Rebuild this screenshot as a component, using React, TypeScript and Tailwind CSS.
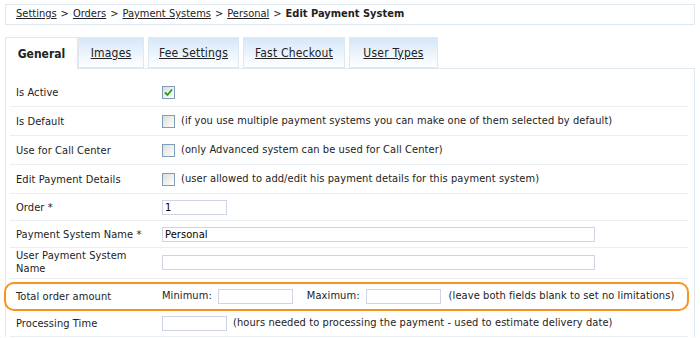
import { ReactNode } from "react";

const tabs = [
	{ name: "Images", w: "w-[66px]" },
	{ name: "Fee Settings", w: "w-[91px]" },
	{ name: "Fast Checkout", w: "w-[102px]" },
	{ name: "User Types", w: "w-[89px]" },
];

function Checkbox({ checked = false }: { checked?: boolean }) {
	return (
		<span className="inline-flex w-[13px] h-[13px] border border-[#7f9db9] bg-gradient-to-br from-[#dcdcd7] to-white items-center justify-center shrink-0">
			{checked && (
				<svg width="9" height="9" viewBox="0 0 9 9" aria-hidden="true">
					<path d="M1 4.5 L3.5 7 L8 1.5" fill="none" stroke="#21a121" strokeWidth="1.8" />
				</svg>
			)}
		</span>
	);
}

function Input({ w, value = "" }: { w: string; value?: string }) {
	return (
		<div className={`${w} h-[15px] border border-[#cfd3e6] bg-white px-[2px] text-[11px] leading-[13px] text-black`}>
			{value}
		</div>
	);
}

function Row({
	label,
	children,
	className = "",
	last = false,
}: {
	label: ReactNode;
	children?: ReactNode;
	className?: string;
	last?: boolean;
}) {
	return (
		<div
			className={`flex items-center ${last ? "" : "border-b border-[#e8eff5]"} ${className}`}
		>
			<div className="w-[152px] pl-[6px] leading-[13px]">{label}</div>
			<div className="flex items-center gap-[6px]">{children}</div>
		</div>
	);
}

export default function App() {
	return (
		<div
			className="w-[700px] h-[338px] bg-white overflow-hidden text-[11px] text-[#222]"
			style={{ fontFamily: '"DejaVu Sans Condensed", "DejaVu Sans", sans-serif' }}
		>
			{/* Breadcrumb */}
			<div className="mx-[5px] mt-[4px] h-[21px] border border-[#dde8f0] flex items-center pl-[10px]">
				<span className="underline">Settings</span>
				<span className="mx-[4px]">&gt;</span>
				<span className="underline">Orders</span>
				<span className="mx-[4px]">&gt;</span>
				<span className="underline">Payment Systems</span>
				<span className="mx-[4px]">&gt;</span>
				<span className="underline">Personal</span>
				<span className="mx-[4px]">&gt;</span>
				<span className="font-bold">Edit Payment System</span>
			</div>

			{/* Tabs */}
			<div className="flex mt-[12px] ml-[5px] gap-[4px] h-[31px]">
				<div className="w-[73px] h-[32px] border border-[#dde8f0] border-b-0 bg-white flex items-center justify-center font-bold text-[12px] z-10 -mr-[4px]">
					General
				</div>
				{tabs.map((t) => (
					<div
						key={t.name}
						className={`${t.w} h-[31px] border border-[#dde8f0] bg-gradient-to-b from-[#d5e7f8] to-white flex items-center justify-center underline text-[12px] tracking-[0.2px]`}
					>
						{t.name}
					</div>
				))}
			</div>

			{/* Panel */}
			<div className="mx-[5px] border border-[#dde8f0] border-b-0 pt-[9px] pl-[4px] pr-[6px] tracking-[0.08px]">
				<Row label="Is Active" className="h-[29px]">
					<Checkbox checked />
				</Row>
				<Row label="Is Default" className="h-[29px]">
					<Checkbox />
					<span>(if you use multiple payment systems you can make one of them selected by default)</span>
				</Row>
				<Row label="Use for Call Center" className="h-[29px]">
					<Checkbox />
					<span>(only Advanced system can be used for Call Center)</span>
				</Row>
				<Row label="Edit Payment Details" className="h-[29px]">
					<Checkbox />
					<span>(user allowed to add/edit his payment details for this payment system)</span>
				</Row>
				<Row label="Order *" className="h-[27px]">
					<Input w="w-[65px]" value="1" />
				</Row>
				<Row label="Payment System Name *" className="h-[27px]">
					<Input w="w-[433px]" value="Personal" />
				</Row>
				<Row label={<>User Payment System<br />Name</>} className="h-[31px] pb-[2px]">
					<Input w="w-[433px]" />
				</Row>
				<Row
					label="Total order amount"
					className="h-[29px] mt-[3px] border-2 border-[#f7941d] rounded-[10px] -ml-[6px] pl-[4px] -mr-[1px]"
					last
				>
					<span>Minimum:</span>
					<Input w="w-[75px]" />
					<span className="ml-[8px]">Maximum:</span>
					<Input w="w-[75px]" />
					<span className="ml-[2px]">(leave both fields blank to set no limitations)</span>
				</Row>
				<Row label="Processing Time" className="h-[26px]">
					<Input w="w-[65px]" />
					<span>(hours needed to processing the payment - used to estimate delivery date)</span>
				</Row>
			</div>
		</div>
	);
}
